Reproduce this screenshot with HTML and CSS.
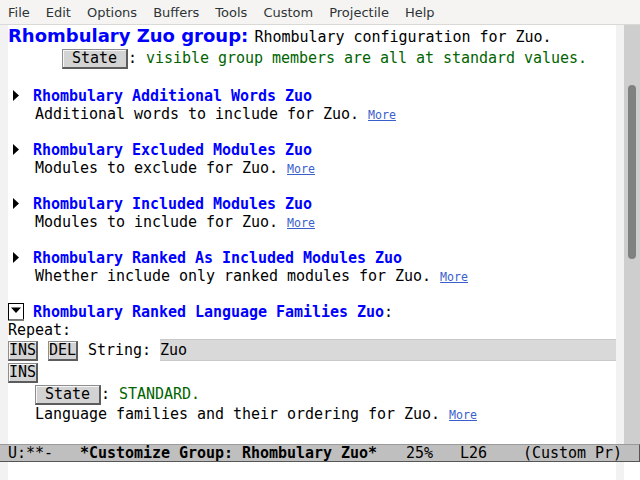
FILE: index.html
```html
<!DOCTYPE html>
<html lang="en">
<head>
    <meta charset="UTF-8">
    <title>*Customize Group: Rhombulary Zuo*</title>
    <link rel="stylesheet" href="styles.css">
</head>
<body>
    <div class="menubar">
        <span class="menu-item">File</span>
        <span class="menu-item">Edit</span>
        <span class="menu-item">Options</span>
        <span class="menu-item">Buffers</span>
        <span class="menu-item">Tools</span>
        <span class="menu-item">Custom</span>
        <span class="menu-item">Projectile</span>
        <span class="menu-item">Help</span>
    </div>
    <div class="window">
        <div class="fringe"></div>
        <div class="buffer">
            <div class="line title-line"><span class="group-tag">Rhombulary Zuo group: </span>Rhombulary configuration for Zuo.</div>
            <div class="line button-line">      <span class="button wide">State</span>: <span class="state">visible group members are all at standard values.</span></div>
            <div class="line"></div>
            <div class="line"><span class="toggle"><svg width="16" height="18" viewBox="0 0 16 18"><polygon points="5,3 11,8.5 5,14" fill="#000"/></svg></span><span class="var-tag">Rhombulary Additional Words Zuo</span></div>
            <div class="line">   Additional words to include for Zuo. <span class="more">More</span></div>
            <div class="line"></div>
            <div class="line"><span class="toggle"><svg width="16" height="18" viewBox="0 0 16 18"><polygon points="5,3 11,8.5 5,14" fill="#000"/></svg></span><span class="var-tag">Rhombulary Excluded Modules Zuo</span></div>
            <div class="line">   Modules to exclude for Zuo. <span class="more">More</span></div>
            <div class="line"></div>
            <div class="line"><span class="toggle"><svg width="16" height="18" viewBox="0 0 16 18"><polygon points="5,3 11,8.5 5,14" fill="#000"/></svg></span><span class="var-tag">Rhombulary Included Modules Zuo</span></div>
            <div class="line">   Modules to include for Zuo. <span class="more">More</span></div>
            <div class="line"></div>
            <div class="line"><span class="toggle"><svg width="16" height="18" viewBox="0 0 16 18"><polygon points="5,3 11,8.5 5,14" fill="#000"/></svg></span><span class="var-tag">Rhombulary Ranked As Included Modules Zuo</span></div>
            <div class="line">   Whether include only ranked modules for Zuo. <span class="more">More</span></div>
            <div class="line"></div>
            <div class="line"><span class="toggle"><svg width="16" height="18" viewBox="0 0 16 18"><rect x="0.5" y="0.5" width="15" height="16.5" fill="#fff" stroke="#000"/><line x1="1" y1="16.5" x2="16" y2="16.5" stroke="#777"/><polygon points="3,4.5 13,4.5 8,10" fill="#000"/></svg></span><span class="var-tag">Rhombulary Ranked Language Families Zuo</span>:</div>
            <div class="line">Repeat:</div>
            <div class="field-line"><span class="button">INS</span><span class="button gap">DEL</span><span class="label">String: </span><span class="field">Zuo</span></div>
            <div class="line button-line"><span class="button">INS</span></div>
            <div class="line button-line">   <span class="button wide">State</span>: <span class="state">STANDARD.</span></div>
            <div class="line">   Language families and their ordering for Zuo. <span class="more">More</span></div>
        </div>
        <div class="fringe"></div>
        <div class="scrollbar"><div class="thumb"></div></div>
    </div>
    <div class="modeline">U:**-   <span class="buffer-id">*Customize Group: Rhombulary Zuo*</span>   25%   L26    (Custom Pr)</div>
    <div class="minibuffer">
        <div class="fringe"></div>
        <div class="echo"></div>
        <div class="fringe"></div>
        <div class="echo-corner"></div>
    </div>
</body>
</html>
```

FILE: styles.css
```css
body {
    margin: 0;
    width: 640px;
    height: 480px;
    overflow: hidden;
    display: flex;
    flex-direction: column;
    background-color: white;
    font-family: "DejaVu Sans Mono", monospace;
    font-size: 15px;
    letter-spacing: -0.03px;
    color: black;
}
.menubar {
    height: 24px;
    border-bottom: 1px solid #dbd9d5;
    background-color: #f5f4f3;
    display: flex;
    align-items: center;
    font-family: "DejaVu Sans", sans-serif;
    font-size: 13px;
    letter-spacing: 0;
    color: #2e3436;
}
.menu-item {
    padding: 0 8px;
}
.window {
    flex: 1;
    display: flex;
    min-height: 0;
}
.fringe {
    width: 8px;
    background-color: #f2f2f2;
}
.buffer {
    flex: 1;
    overflow: hidden;
}
.line {
    height: 18px;
    line-height: 18px;
    white-space: pre;
}
.title-line {
    height: 22px;
    line-height: 22px;
}
.group-tag {
    font-family: "DejaVu Sans", sans-serif;
    font-size: 18px;
    font-weight: bold;
    letter-spacing: 0;
    color: #0000ff;
}
.button-line {
    height: 22px;
    line-height: 22px;
}
.button {
    display: inline-block;
    line-height: 17px;
    background-color: #d3d3d3;
    border-style: solid;
    border-width: 1px 2px 2px 1px;
    border-color: #8e8e8e #5c5c5c #5c5c5c #8e8e8e;
    box-shadow: inset 1px 1px 0 #f6f6f6;
}
.button.wide {
    padding: 0 9px;
}
.button.gap {
    margin-left: 10px;
}
.state {
    color: #006400;
}
.toggle {
    display: inline-block;
    width: 16px;
    height: 18px;
    margin-right: 9px;
    vertical-align: top;
}
.toggle svg {
    display: block;
}
.var-tag {
    font-weight: bold;
    color: #0000ff;
}
.more {
    font-size: 11.6px;
    letter-spacing: 0;
    color: #3a5fcd;
    text-decoration: underline;
}
.field-line {
    height: 22px;
    line-height: 22px;
    white-space: pre;
    display: flex;
    align-items: baseline;
}
.label {
    margin-left: 10px;
}
.field {
    flex: 1;
    box-sizing: border-box;
    height: 22px;
    line-height: 20px;
    background-color: #d9d9d9;
    border-top: 1px solid #c9c9c9;
    border-bottom: 1px solid #c9c9c9;
}
.scrollbar {
    width: 16px;
    background-color: #cecece;
}
.thumb {
    width: 8px;
    height: 174px;
    margin: 60px 0 0 4px;
    border-radius: 4px;
    background-color: #7f8181;
}
.modeline {
    box-sizing: border-box;
    height: 18px;
    line-height: 17px;
    padding-left: 8px;
    white-space: pre;
    background-color: #bfbfbf;
    border-top: 1px solid #9a9a9a;
    border-bottom: 1px solid #555;
    border-right: 1px solid #555;
}
.buffer-id {
    font-weight: bold;
    margin-right: 2px;
}
.minibuffer {
    height: 18px;
    display: flex;
}
.echo {
    flex: 1;
}
.echo-corner {
    width: 16px;
}
```
